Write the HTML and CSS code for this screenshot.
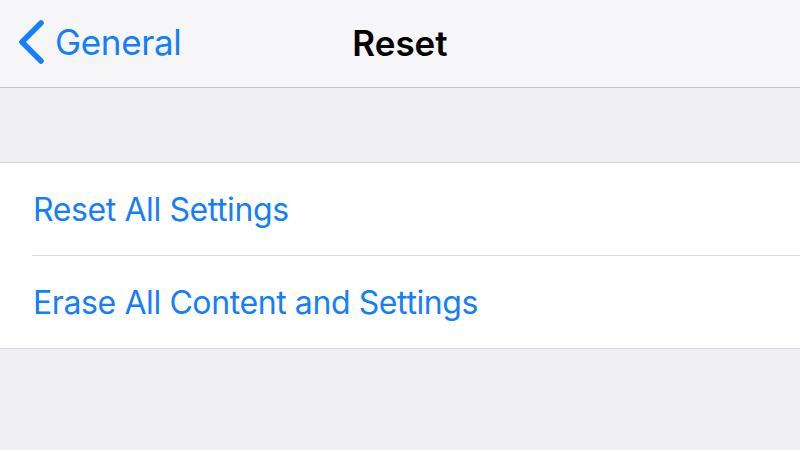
FILE: index.html
```html
<!DOCTYPE html>
<html lang="en">
<head>
<meta charset="UTF-8">
<title>Reset</title>
<link rel="stylesheet" href="styles.css">
</head>
<body>
    <div class="navBar">
        <div class="backButton">
            <svg class="chevron" width="28" height="44" viewBox="0 0 28 44">
                <path d="M24 3 L5 22 L24 41" fill="none" stroke="#147efb" stroke-width="5.5" stroke-linecap="round" stroke-linejoin="round"/>
            </svg>
            <span>General</span>
        </div>
        <div class="navTitle">Reset</div>
    </div>

    <div class="groupGap"></div>

    <div class="list">
        <div class="row">Reset All Settings</div>
        <div class="row">Erase All Content and Settings</div>
    </div>
</body>
</html>
```

FILE: styles.css
```css
body {
    margin: 0;
    width: 800px;
    height: 450px;
    overflow: hidden;
    background-color: #efeff4;
    font-family: Inter, "Noto Sans", sans-serif;
}

.navBar {
    position: relative;
    height: 87px;
    background-color: #f6f6f8;
    border-bottom: 1px solid #c4c4c7;
    display: flex;
    align-items: center;
    justify-content: center;
}

.backButton {
    position: absolute;
    left: 17px;
    top: 20px;
    display: flex;
    align-items: center;
    gap: 10px;
    color: #147efb;
    font-size: 35px;
    letter-spacing: -0.35px;
}

.chevron {
    display: block;
}

.navTitle {
    font-size: 35px;
    font-weight: 600;
    color: #000;
    margin-bottom: 2px;
}

.groupGap {
    height: 74px;
    border-bottom: 1px solid #d4d4d8;
}

.list {
    background-color: #fff;
    border-bottom: 1px solid #d4d4d8;
    padding-left: 32px;
}

.row {
    height: 92px;
    display: flex;
    align-items: center;
    color: #147efb;
    font-size: 32px;
    letter-spacing: -0.4px;
    padding-left: 1px;
}

.row + .row {
    border-top: 1px solid #dcdcdf;
}
```
